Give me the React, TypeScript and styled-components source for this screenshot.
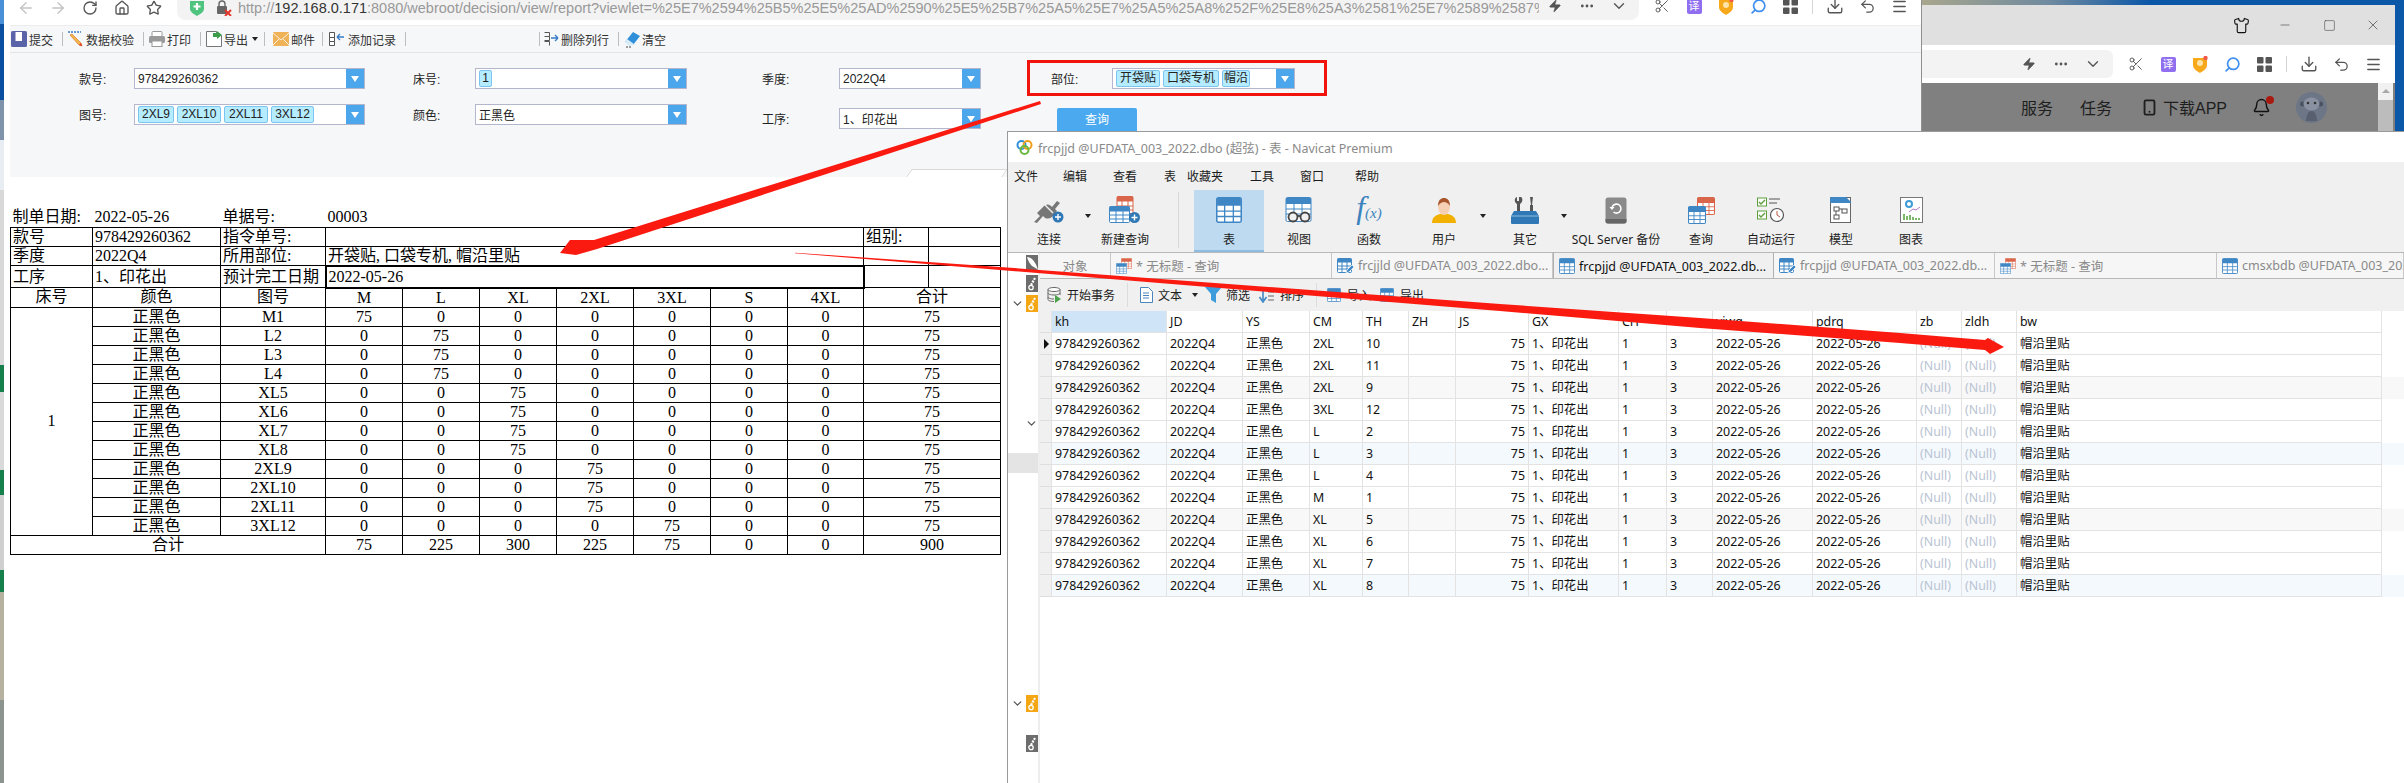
import React from "react";
import styled, { createGlobalStyle } from "styled-components";
import {
  ArrowLeft, ArrowRight, RotateCw, Home, Star, Zap, MoreHorizontal, ChevronDown, Scissors, Search,
  Download, Undo2, Menu, Shirt, Minus, Square, X, Bell, Smartphone, ChevronDown as Chevron,
} from "lucide-react";

const UI_FONT = `"Liberation Sans", "Noto Sans CJK SC", sans-serif`;
const NAV_FONT = `"Noto Sans", "Noto Sans CJK SC", sans-serif`;
const REPORT_FONT = `"Liberation Serif", "Noto Sans CJK SC", serif`;

const GlobalStyle = createGlobalStyle`
  html, body { margin: 0; padding: 0; background: #fff; }
  * { box-sizing: border-box; }
`;

const Desktop = styled.div`
  position: relative;
  width: 2404px;
  height: 783px;
  overflow: hidden;
  font-family: ${UI_FONT};
  background:
    linear-gradient(180deg, #4a90d9 0 24px, #0b4fa0 24px 100px, #7f93ab 100px 140px, #e8edf3 140px 190px, #d8d8d8 190px 365px, #16804c 365px 392px, #d9d9d9 392px 470px, #16804c 470px 495px, #cfcfcf 495px 570px, #16804c 570px 592px, #b6b09e 592px 700px, #8c9490 700px) 0 0 / 4px 100% no-repeat,
    linear-gradient(90deg, #a8a68c 1922px, #6f8aa0 2050px, #0b57a8 2150px);
`;

const FrontWindow = styled.div`
  position: absolute;
  left: 4px;
  top: 0;
  width: 1918px;
  height: 783px;
  background: #fff;
  overflow: hidden;
  border-right: 1px solid #8f8f8f;
`;

const BackWindow = styled.div`
  position: absolute;
  left: 1922px;
  top: 5px;
  width: 473px;
  height: 126px;
  overflow: hidden;
  display: flex;
  flex-direction: column;
`;

const BackTitle = styled.div`
  height: 40px;
  background: #e0e0e0;
  display: flex;
  align-items: center;
  justify-content: flex-end;
  color: #333;
`;

const CaptionButton = styled.div`
  width: 44px;
  display: flex;
  justify-content: center;
  color: #555;
`;

const AddressRow = styled.div<{ $front?: boolean }>`
  height: 38px;
  flex: none;
  display: flex;
  align-items: center;
  background: #fff;
  padding-right: 6px;
  margin-top: ${(p) => (p.$front ? "-13px" : "0")};
  padding-left: ${(p) => (p.$front ? "6px" : "0")};
`;

const NavSlot = styled.div<{ $dim?: boolean }>`
  width: 32px;
  height: 20px;
  flex: none;
  display: flex;
  align-items: center;
  justify-content: center;
  color: ${(p) => (p.$dim ? "#c4c4c4" : "#555")};
  transform: translateY(2px);
`;

const PillSlot = styled(NavSlot)`
  transform: none;
`;

const Pill = styled.div<{ $front?: boolean }>`
  flex: 1;
  min-width: 0;
  height: 28px;
  background: #f3f3f3;
  border-radius: ${(p) => (p.$front ? "8px" : "0 6px 6px 0")};
  margin-left: ${(p) => (p.$front ? "7px" : "0")};
  display: flex;
  align-items: center;
  padding-left: 13px;
  padding-right: 4px;
`;

const Url = styled.div`
  flex: 1;
  min-width: 0;
  margin-left: 6px;
  white-space: nowrap;
  overflow: hidden;
  font-size: 14.5px;
  color: #999;
  font-family: "Liberation Sans", sans-serif;
  transform: translateY(2px);

  b {
    font-weight: 400;
    color: #333;
  }
`;

const Spacer = styled.div`
  flex: 1;
`;

const ToolSlot = styled.div`
  width: 32px;
  height: 24px;
  flex: none;
  display: flex;
  align-items: center;
  justify-content: center;
  color: #555;
`;

const ToolGap = styled.div`
  width: 7px;
  flex: none;
`;

const ToolSep = styled.div`
  width: 1px;
  height: 16px;
  margin: 0 6px;
  flex: none;
  background: #d5d5d5;
`;

const TranslateBadge = styled.span`
  width: 15px;
  height: 15px;
  border-radius: 2px;
  background: #8f6ff0;
  color: #fff;
  font-size: 11px;
  line-height: 15px;
  text-align: center;
`;

const DimArea = styled.div`
  flex: 1;
  background: #808080;
  display: flex;
  align-items: center;
  justify-content: flex-end;
  color: #1e1e1e;
  font-size: 16px;
  overflow: hidden;
`;

const DimLink = styled.span<{ $mr: number }>`
  margin-right: ${(p) => p.$mr}px;
  display: flex;
  align-items: center;
  gap: 5px;
  white-space: nowrap;
`;

const BellWrap = styled.span`
  position: relative;
  display: flex;
`;

const SmallDot = styled.span`
  position: absolute;
  right: -3px;
  top: -2px;
  width: 8px;
  height: 8px;
  border-radius: 50%;
  background: #a81a10;
`;

const PageScroll = styled.div`
  width: 15px;
  height: 100%;
  margin-left: 51px;
  margin-right: 2px;
  background: #f1f1f1;
  padding-top: 17px;
  position: relative;

  &::before {
    content: "";
    position: absolute;
    left: 4px;
    top: 6px;
    border: 4px solid transparent;
    border-top: 0;
    border-bottom: 4px solid #a8a8a8;
  }

  &::after {
    content: "";
    display: block;
    height: 100%;
    background: #bcbcbc;
  }
`;

const Toolbar = styled.div`
  margin-left: 6px;
  height: 28px;
  background: #f6f7f9;
  border-top: 1px solid #ececec;
  border-bottom: 1px solid #e2e4e8;
  display: flex;
  align-items: center;
  padding-left: 1px;
  color: #333;
  font-size: 12px;
`;

const ToolItem = styled.div<{ $gap?: number }>`
  display: flex;
  align-items: center;
  gap: ${(p) => p.$gap ?? 2}px;
  white-space: nowrap;
`;

const BarSep = styled.div<{ $l?: number; $r?: number }>`
  width: 1px;
  height: 14px;
  background: #bdbdbd;
  margin-left: ${(p) => p.$l ?? 9}px;
  margin-right: ${(p) => p.$r ?? 5}px;
`;

const SmallCaret = styled.span<{ $ml?: number; $color?: string }>`
  width: 0;
  height: 0;
  flex: none;
  margin-left: ${(p) => p.$ml ?? 0}px;
  border: 3px solid transparent;
  border-bottom: 0;
  border-top: 4px solid ${(p) => p.$color ?? "#222"};
`;

const DropCaret = styled(SmallCaret)`
  border-width: 6px 4px 0;
`;

const FilterPanel = styled.div`
  position: relative;
  margin-left: 6px;
  height: 124px;
  background: #f6f7f9;
  padding: 15px 0 0 69px;
  display: flex;
  flex-direction: column;
  gap: 15px;
  font-size: 12px;
  color: #222;
`;

const FilterRow = styled.div`
  display: flex;
  height: 21px;
`;

const Field = styled.div<{ $ml?: number; $drop?: number }>`
  display: flex;
  align-items: center;
  margin-left: ${(p) => p.$ml ?? 0}px;
  margin-top: ${(p) => p.$drop ?? 0}px;
  height: 21px;
  flex: none;
`;

const FieldLabel = styled.span<{ $w: number }>`
  width: ${(p) => p.$w}px;
  flex: none;
`;

const Combo = styled.div<{ $w: number }>`
  width: ${(p) => p.$w}px;
  height: 21px;
  display: flex;
  background: #fff;
  border: 1px solid #b3b6cc;
  overflow: hidden;
`;

const ComboValue = styled.div`
  flex: 1;
  min-width: 0;
  display: flex;
  align-items: center;
  gap: 3px;
  padding-left: 3px;
  white-space: nowrap;
  overflow: hidden;
`;

const Tag = styled.span<{ $w: number }>`
  width: ${(p) => p.$w}px;
  flex: none;
  height: 17px;
  line-height: 15px;
  text-align: center;
  background: #b6ecff;
  border: 1px solid #7cc5f0;
  border-radius: 2px;
  overflow: hidden;
`;

const ComboButton = styled.div`
  width: 18px;
  flex: none;
  background: #4ba6ec;
  display: flex;
  align-items: center;
  justify-content: center;
`;

const QueryButton = styled.div`
  width: 80px;
  height: 28px;
  margin-left: 76px;
  margin-top: 4px;
  flex: none;
  background: #4aa9ef;
  border-radius: 2px;
  color: #fff;
  text-align: center;
  line-height: 24px;
`;

const SplitHandle = styled.div`
  position: absolute;
  right: 916px;
  bottom: 0;
  width: 96px;
  height: 8px;
  background: #fff;
  border: 1px solid #d9d9d9;
  border-bottom: 0;
  transform: skewX(-35deg);
`;

const ReportArea = styled.div`
  padding: 31px 0 0 6px;
  background: #fff;
`;

const ReportTable = styled.table`
  width: 990px;
  table-layout: fixed;
  border-collapse: collapse;
  font-family: ${REPORT_FONT};
  font-size: 16px;
  line-height: 18px;
  color: #000;
`;

const ReportRow = styled.tr<{ $h?: number }>`
  height: ${(p) => p.$h ?? 19}px;
`;

const Cell = styled.td<{ $left?: boolean; $plain?: boolean; $heavy?: boolean }>`
  padding: 0;
  padding-left: ${(p) => (p.$left ? "2px" : "0")};
  overflow: hidden;
  white-space: nowrap;
  text-align: ${(p) => (p.$left ? "left" : "center")};
  border: ${(p) => (p.$plain ? "0" : p.$heavy ? "2px solid #000" : "1px solid #000")};
`;

const NavicatWindow = styled.div`
  position: absolute;
  left: 1007px;
  top: 131px;
  width: 1397px;
  height: 652px;
  display: flex;
  flex-direction: column;
  background: #f0f0f0;
  border-top: 1px solid #9a9a9a;
  border-left: 1px solid #9a9a9a;
  font-family: ${NAV_FONT};
  font-size: 12px;
  color: #1c1c1c;
  overflow: hidden;
`;

const TitleBar = styled.div`
  height: 30px;
  flex: none;
  background: #fff;
  display: flex;
  align-items: center;
  gap: 5px;
  padding-left: 8px;
  font-size: 12.5px;
  color: #8a8a8a;
  white-space: nowrap;
`;

const MenuBar = styled.div`
  height: 28px;
  flex: none;
  display: flex;
  align-items: center;
  padding-left: 6px;
`;

const MenuItem = styled.span<{ $mr: number }>`
  margin-right: ${(p) => p.$mr}px;
  white-space: nowrap;
`;

const RibbonBar = styled.div`
  height: 62px;
  flex: none;
  display: flex;
  padding-left: 6px;
`;

const Tile = styled.div<{ $w?: number; $active?: boolean }>`
  width: ${(p) => p.$w ?? 70}px;
  flex: none;
  height: 62px;
  padding-top: 3px;
  display: flex;
  flex-direction: column;
  align-items: center;
  white-space: nowrap;
  background: ${(p) => (p.$active ? "#bedaf0" : "transparent")};
  border-bottom: 2px solid ${(p) => (p.$active ? "#8fbde2" : "transparent")};
`;

const TileIcon = styled.div`
  height: 34px;
  margin-bottom: 3px;
  display: flex;
  align-items: center;
  justify-content: center;
`;

const FxMark = styled.span`
  font-family: "Liberation Serif", serif;
  font-style: italic;
  font-size: 32px;
  line-height: 30px;
  color: #3c83be;

  small {
    font-size: 15px;
  }
`;

const RibbonCaret = styled.div<{ $w: number }>`
  width: ${(p) => p.$w}px;
  flex: none;
  padding-top: 28px;
  height: 62px;
  padding-left: 1px;
`;

const RibbonSep = styled.div`
  width: 1px;
  height: 56px;
  margin: 2px 15px 0 18px;
  flex: none;
  background: #d8d8d8;
`;

const NavBody = styled.div`
  flex: 1;
  min-height: 0;
  display: flex;
  border-top: 1px solid #b8b8b8;
`;

const Sidebar = styled.div`
  width: 32px;
  flex: none;
  background: #fff;
  border-right: 2px solid #eee;
  display: flex;
  flex-direction: column;
  padding-top: 2px;
`;

const SideRow = styled.div<{ $mt?: number; $h?: number; $selected?: boolean }>`
  position: relative;
  height: ${(p) => p.$h ?? 17}px;
  flex: none;
  margin-top: ${(p) => p.$mt ?? 0}px;
  display: flex;
  align-items: center;
  justify-content: flex-end;
  padding-left: 2px;
  background: ${(p) => (p.$selected ? "#e4e4e4" : "transparent")};
  color: #555;
`;

const SideTile = styled.div<{ $orange?: boolean }>`
  width: 12px;
  height: 17px;
  flex: none;
  background: ${(p) => (p.$orange ? "#f4a614" : "#6c6c6c")};
  display: flex;
  align-items: center;
  justify-content: center;
`;

const SideChevron = styled.div<{ $ml: number }>`
  margin-right: auto;
  margin-left: ${(p) => p.$ml}px;
  display: flex;
`;

const MainColumn = styled.div`
  flex: 1;
  min-width: 0;
  display: flex;
  flex-direction: column;
`;

const TabBar = styled.div`
  height: 26px;
  flex: none;
  display: flex;
  background: #f6f6f6;
  border-bottom: 1px solid #b8b8b8;
  overflow: hidden;
  color: #8a8a8a;
  font-size: 12.5px;
`;

const Tab = styled.div<{ $w: number; $active?: boolean; $center?: boolean }>`
  width: ${(p) => p.$w}px;
  flex: none;
  height: ${(p) => (p.$active ? "26px" : "25px")};
  display: flex;
  align-items: center;
  justify-content: ${(p) => (p.$center ? "center" : "flex-start")};
  gap: 4px;
  padding-left: ${(p) => (p.$center ? "0" : "5px")};
  white-space: nowrap;
  overflow: hidden;
  background: ${(p) => (p.$active ? "#f0f0f0" : "transparent")};
  color: ${(p) => (p.$active ? "#111" : "#8a8a8a")};
  border-right: 1px solid ${(p) => (p.$active ? "#b0b0b0" : "#c8c8c8")};
  border-left: ${(p) => (p.$active ? "1px solid #b0b0b0" : "0")};
`;

const SubBar = styled.div`
  height: 32px;
  flex: none;
  display: flex;
  align-items: center;
  padding-left: 7px;
  background: #f0f0f0;
`;

const SubItem = styled.div<{ $gap?: number; $mr?: number }>`
  display: flex;
  align-items: center;
  gap: ${(p) => p.$gap ?? 5}px;
  margin-right: ${(p) => p.$mr ?? 9}px;
  white-space: nowrap;
`;

const SubSep = styled.div<{ $r: number }>`
  width: 1px;
  height: 24px;
  margin-left: 3px;
  margin-right: ${(p) => p.$r}px;
  background: #dcdcdc;
`;

const GridArea = styled.div`
  flex: 1;
  background: #fff;
  font-size: 12.4px;
`;

const GridRow = styled.div<{ $tint?: string }>`
  display: grid;
  grid-template-columns: 12px 115px 76px 67px 53px 46px 47px 73px 90px 48px 46px 100px 104px 45px 55px 365px;
  height: 22px;
  background: ${(p) => p.$tint ?? "#fff"};
`;

const GridCell = styled.div<{ $right?: boolean; $null?: boolean; $selected?: boolean }>`
  height: 22px;
  line-height: 21px;
  padding: 0 3px;
  white-space: nowrap;
  overflow: hidden;
  text-align: ${(p) => (p.$right ? "right" : "left")};
  color: ${(p) => (p.$null ? "#b9c3d3" : "#111")};
  background: ${(p) => (p.$selected ? "#cfe4f6" : "transparent")};
  border-right: 1px solid #e3e3e3;
  border-bottom: 1px solid #e3e3e3;
`;

const Marker = styled.div<{ $current?: boolean }>`
  height: 22px;
  background: #f0f0f0;
  border-bottom: 1px solid #dedede;
  border-right: 1px solid #e3e3e3;
  display: flex;
  align-items: center;
  padding-left: 4px;

  &::before {
    content: "";
    display: ${(p) => (p.$current ? "block" : "none")};
    border: 5px solid transparent;
    border-right: 0;
    border-left: 5px solid #111;
  }
`;

const Overlay = styled.svg`
  position: absolute;
  left: 0;
  top: 0;
  pointer-events: none;
`;

const IconStack = styled.span<{ $w: number; $h: number }>`
  position: relative;
  display: block;
  flex: none;
  width: ${(p) => p.$w}px;
  height: ${(p) => p.$h}px;
`;

const StackTop = styled.span`
  position: absolute;
  right: 0;
  top: 0;
  display: flex;
`;

const StackBottom = styled.span`
  position: absolute;
  left: 0;
  bottom: 0;
  display: flex;
`;

function GridIcon({ size = 16, color = "#3f86c4" }: { size?: number; color?: string }) {
  return (
    <svg width={size} height={size} viewBox="0 0 24 24" style={{ flex: "none" }}>
      <rect x="0.7" y="0.7" width="22.6" height="22.6" rx="1.5" fill="#fff" stroke={color} strokeWidth="1.4" />
      <path d="M1 2a1 1 0 0 1 1-1h20a1 1 0 0 1 1 1v6H1z" fill={color} />
      <path d="M1 13h22M1 18h22M8 7v16M16 7v16" stroke={color} strokeWidth="1.2" />
    </svg>
  );
}

function QueryIcon({ size = 16 }: { size?: number }) {
  const inner = Math.round(size * 0.68);
  return (
    <IconStack $w={size} $h={size}>
      <StackTop><GridIcon size={inner} color="#d9664a" /></StackTop>
      <StackBottom><GridIcon size={inner} /></StackBottom>
    </IconStack>
  );
}

function EditGridIcon() {
  return (
    <svg width="17" height="16" viewBox="0 0 17 16" style={{ flex: "none" }}>
      <rect x="0.5" y="0.5" width="14" height="14" rx="1" fill="#fff" stroke="#3f86c4" />
      <rect x="0.5" y="0.5" width="14" height="4" fill="#3f86c4" />
      <path d="M0 8h14M0 11h14M5 4v11M10 4v11" stroke="#3f86c4" />
      <path d="M9 15l1-3 5-5 2 2-5 5z" fill="#3f86c4" stroke="#fff" strokeWidth=".7" />
    </svg>
  );
}

function PlusBadge({ x, y }: { x: number; y: number }) {
  return (
    <g>
      <circle cx={x} cy={y} r="5.5" fill="#2f78b5" />
      <path d={`M${x - 3} ${y}h6M${x} ${y - 3}v6`} stroke="#fff" strokeWidth="1.4" />
    </g>
  );
}

function PlugIcon() {
  return (
    <svg width="32" height="28" viewBox="0 0 32 28">
      <path d="M1 26l6-6-3-3 7-7c3-2 5-2 7 0l1 1 5-6 3 2-5 6 2 2-5 6c-3 2-6 2-8 0l-1-1-6 7z" fill="#777" />
      <path d="M12 9l8 8" stroke="#f0f0f0" strokeWidth="1.5" />
      <PlusBadge x={25} y={21} />
    </svg>
  );
}

function NewQueryIcon() {
  return (
    <svg width="32" height="28" viewBox="0 0 32 28">
      <rect x="8" y="0.5" width="16" height="17" rx="1" fill="#fff" stroke="#d9664a" />
      <rect x="8" y="0.5" width="16" height="5" fill="#d9664a" />
      <path d="M8 10h16M8 14h16M13 5v13M19 5v13" stroke="#d9664a" />
      <rect x="0.5" y="10.5" width="20" height="16" rx="1" fill="#fff" stroke="#3f86c4" />
      <rect x="0.5" y="10.5" width="20" height="5" fill="#3f86c4" />
      <path d="M0 19h20M0 23h20M7 15v12M14 15v12" stroke="#3f86c4" />
      <PlusBadge x={25.5} y={21.5} />
    </svg>
  );
}

function ViewIcon() {
  return (
    <svg width="28" height="26" viewBox="0 0 28 26">
      <rect x="1" y="0.5" width="25" height="24" rx="1.5" fill="#fff" stroke="#3f86c4" />
      <path d="M1 2a1.5 1.5 0 0 1 1.5-1.5h22A1.5 1.5 0 0 1 26 2v5H1z" fill="#3f86c4" />
      <path d="M1 12h25M1 17h25M9 7v18M17 7v18" stroke="#3f86c4" />
      <circle cx="8" cy="20" r="4.5" fill="#f0f0f0" stroke="#444" strokeWidth="1.8" />
      <circle cx="20" cy="20" r="4.5" fill="#f0f0f0" stroke="#444" strokeWidth="1.8" />
      <path d="M12.5 19h3" stroke="#444" strokeWidth="1.8" />
    </svg>
  );
}

function UserIcon() {
  return (
    <svg width="26" height="27" viewBox="0 0 26 27">
      <path d="M1 26c0-6 4-8 8-9h8c4 1 8 3 8 9z" fill="#f2b000" />
      <ellipse cx="13" cy="10" rx="6" ry="8" fill="#f6d0b4" />
      <path d="M7 9c0-6 3-8 6-8s6 2 6 8c-2-3-4-4-6-4s-4 1-6 4z" fill="#a8552c" />
    </svg>
  );
}

function ToolsIcon() {
  return (
    <svg width="28" height="28" viewBox="0 0 28 28">
      <path d="M8 1v4h-2V1C3 2 3 6 6 8v10h3V8c3-2 3-6 1-7z" fill="#555" />
      <path d="M19 1l1 8h-1v9h3V9h-1l1-8z" fill="#555" />
      <path d="M3 15h22l3 5v7a1 1 0 0 1-1 1H1a1 1 0 0 1-1-1v-7z" fill="#2f78b5" />
      <path d="M0 20h28" stroke="#8fbde2" />
    </svg>
  );
}

function BackupIcon() {
  return (
    <svg width="22" height="27" viewBox="0 0 22 27">
      <rect x="0.5" y="0.5" width="21" height="26" rx="2.5" fill="#8a8a8a" />
      <path d="M0.5 22h21v2a2.5 2.5 0 0 1-2.5 2.5H3A2.5 2.5 0 0 1 .5 24z" fill="#666" />
      <path d="M7 11a4.5 4.5 0 1 1 1.5 4" fill="none" stroke="#fff" strokeWidth="1.6" />
      <path d="M4.5 10h5l-2.5 3z" fill="#fff" />
    </svg>
  );
}

function AutoRunIcon() {
  return (
    <svg width="28" height="26" viewBox="0 0 28 26">
      <rect x="0.5" y="1" width="9" height="8" fill="#fff" stroke="#5d9e3c" />
      <path d="M2 5l2 2 4-4" fill="none" stroke="#5d9e3c" strokeWidth="1.4" />
      <path d="M12 2h11M12 6h8" stroke="#888" strokeWidth="1.4" />
      <rect x="0.5" y="14" width="9" height="8" fill="#fff" stroke="#5d9e3c" />
      <path d="M2 18l2 2 4-4" fill="none" stroke="#5d9e3c" strokeWidth="1.4" />
      <circle cx="20" cy="18" r="6.5" fill="#fff" stroke="#555" strokeWidth="1.2" />
      <path d="M20 14v4l3 2" fill="none" stroke="#c2563c" />
    </svg>
  );
}

function ModelIcon() {
  return (
    <svg width="22" height="26" viewBox="0 0 22 26">
      <rect x="0.5" y="0.5" width="20" height="25" fill="#fff" stroke="#666" />
      <path d="M0 0h16l5 5v1H0z" fill="#3f86c4" />
      <rect x="4" y="10" width="5" height="4" fill="#fff" stroke="#555" />
      <rect x="12" y="12" width="5" height="4" fill="#fff" stroke="#555" />
      <rect x="4" y="18" width="5" height="4" fill="#fff" stroke="#555" />
      <path d="M9 12h3M6 14v4" stroke="#555" />
    </svg>
  );
}

function ChartIcon() {
  return (
    <svg width="23" height="26" viewBox="0 0 23 26">
      <rect x="0.5" y="0.5" width="22" height="25" fill="#fff" stroke="#777" />
      <circle cx="9" cy="7" r="3" fill="none" stroke="#3f9cd6" strokeWidth="2" />
      <path d="M9 15l4-3 3 1 4-3" fill="none" stroke="#b878c8" />
      <path d="M4 23v-6M7 23v-4M10 23v-5M13 23v-3M16 23v-2M19 23v-2" stroke="#5aa845" strokeWidth="1.6" />
    </svg>
  );
}

function LogoIcon() {
  return (
    <svg width="17" height="17" viewBox="0 0 17 17">
      <circle cx="5.5" cy="6" r="4" fill="none" stroke="#2f8fd8" strokeWidth="2" />
      <circle cx="11.5" cy="6" r="4" fill="none" stroke="#f0a020" strokeWidth="2" />
      <circle cx="8.5" cy="11" r="4" fill="none" stroke="#68b840" strokeWidth="2" />
    </svg>
  );
}

function KeyGlyph() {
  return (
    <svg width="9" height="14" viewBox="0 0 9 14">
      <path d="M7 1L3 8" stroke="#fff" strokeWidth="2.2" strokeDasharray="2 1" />
      <circle cx="3" cy="10.5" r="2.2" fill="none" stroke="#fff" strokeWidth="1.3" />
    </svg>
  );
}

function DolphinGlyph() {
  return (
    <svg width="11" height="15" viewBox="0 0 11 15">
      <path d="M0 1c4 0 8 4 10 10l1 3c-2-2-4-3-6-4C3 8 1 5 0 1z" fill="#fff" />
    </svg>
  );
}

function ShieldIcon() {
  return (
    <svg width="16" height="17" viewBox="0 0 16 17">
      <path d="M1 2h14v7c0 4-4 6-7 8-3-2-7-4-7-8z" fill="#f7a81b" />
      <circle cx="8" cy="7" r="3" fill="#ffe3a8" />
      <circle cx="13.5" cy="2" r="2.2" fill="#f2584a" />
    </svg>
  );
}

function AppsIcon() {
  return (
    <svg width="15" height="15" viewBox="0 0 15 15" fill="#555">
      <rect width="6.5" height="6.5" rx="1" />
      <rect x="8.5" width="6.5" height="6.5" rx="1" />
      <rect y="8.5" width="6.5" height="6.5" rx="1" />
      <rect x="8.5" y="8.5" width="6.5" height="6.5" rx="1" />
    </svg>
  );
}

function GreenShield() {
  return (
    <svg width="14" height="16" viewBox="0 0 14 16" style={{ flex: "none", transform: "translateY(2px)" }}>
      <path d="M0 1h14v8c0 3-4 5-7 7-3-2-7-4-7-7z" fill="#4fc47f" />
      <path d="M7 3v7M3.5 6.5h7" stroke="#fff" strokeWidth="2.2" />
    </svg>
  );
}

function LockIcon() {
  return (
    <svg width="16" height="16" viewBox="0 0 16 16" style={{ flex: "none", marginLeft: 12, transform: "translateY(2px)" }}>
      <rect x="1" y="6" width="10" height="8" rx="1" fill="#666" />
      <path d="M3 6V4a3 3 0 0 1 6 0v2" fill="none" stroke="#666" strokeWidth="1.4" />
      <path d="M9 10l6 6M15 10l-6 6" stroke="#e2372a" strokeWidth="2" />
    </svg>
  );
}

function SaveIcon() {
  return (
    <svg width="16" height="16" viewBox="0 0 16 16">
      <rect x="0.5" y="0.5" width="15" height="15" rx="1" fill="#fff" stroke="#5a62a8" />
      <rect x="0.5" y="0.5" width="4" height="15" fill="#5a62a8" />
      <rect x="11" y="0.5" width="4.5" height="15" fill="#5a62a8" />
      <rect x="0.5" y="10" width="15" height="5.5" fill="#5a62a8" />
    </svg>
  );
}

function CheckDataIcon() {
  return (
    <svg width="16" height="16" viewBox="0 0 16 16">
      <path d="M0 1h13" stroke="#3a7cc8" strokeDasharray="2 1" strokeWidth="1.4" />
      <path d="M2 4l9 10 3 1-1-3L4 3z" fill="#f2b84b" stroke="#d9772a" strokeWidth=".7" />
      <path d="M11 14l3 1-1-3z" fill="#e2372a" />
    </svg>
  );
}

function PrintIcon() {
  return (
    <svg width="16" height="16" viewBox="0 0 16 16" fill="#9a9a9a">
      <rect x="3" y="0.5" width="10" height="5" rx="1" fill="#fff" stroke="#9a9a9a" />
      <rect y="5" width="16" height="7" rx="1.5" />
      <rect x="3" y="10" width="10" height="5.5" fill="#fff" stroke="#9a9a9a" />
    </svg>
  );
}

function ExportIcon() {
  return (
    <svg width="16" height="16" viewBox="0 0 16 16">
      <path d="M0.5 0.5h10v4h5v11H0.5z" fill="#fff" stroke="#777" />
      <path d="M7 2h4V0l5 4-5 4V6H7z" fill="#3c9e4a" />
    </svg>
  );
}

function MailIcon() {
  return (
    <svg width="16" height="16" viewBox="0 0 16 16">
      <rect y="1" width="16" height="14" rx="1" fill="#efb257" />
      <path d="M0 2l8 7 8-7M0 14l6-6M16 14l-6-6" fill="none" stroke="#fff" strokeWidth=".8" />
    </svg>
  );
}

function AddRowIcon() {
  return (
    <svg width="16" height="16" viewBox="0 0 16 16">
      <path d="M0.5 1.5h5v5h-5zM0.5 6.5h5v4h-5zM0.5 10.5h5v4h-5z" fill="#fff" stroke="#555" />
      <path d="M15 6H8M8 6l3-3M8 6l3 3" stroke="#3a7cc8" strokeWidth="1.4" fill="none" />
    </svg>
  );
}

function DeleteRowIcon() {
  return (
    <svg width="15" height="16" viewBox="0 0 15 16">
      <path d="M0.5 1.5h5v4h-5M5.5 5.5v4h-5M0.5 10.5h5v4" fill="none" stroke="#555" />
      <path d="M7 7h7M14 7l-3-3M14 7l-3 3" stroke="#3a7cc8" strokeWidth="1.4" fill="none" />
    </svg>
  );
}

function EraserIcon() {
  return (
    <svg width="17" height="17" viewBox="0 0 17 17">
      <path d="M1 11l8-10 7 4-7 9z" fill="#2f8fd8" />
      <path d="M1 11l4 4 4-1 1-1-7-5z" fill="#d8ecf8" />
      <path d="M2 16h6" stroke="#444" strokeDasharray="2 1" />
    </svg>
  );
}

function DbIcon() {
  return (
    <svg width="14" height="16" viewBox="0 0 14 16">
      <ellipse cx="7" cy="2.5" rx="6" ry="2" fill="#fff" stroke="#666" />
      <path d="M1 2.5v10c0 1 2.5 2 6 2M13 2.5V8M1 6c0 1 2.5 2 6 2s6-1 6-2M1 10c0 1 2.5 2 6 2" fill="none" stroke="#666" />
      <path d="M8 8l6 4-6 4z" fill="#4aa34a" />
    </svg>
  );
}

function DocIcon() {
  return (
    <svg width="15" height="16" viewBox="0 0 15 16">
      <path d="M1.5 0.5h8l4 4v11h-12z" fill="#fff" stroke="#4a84bd" />
      <path d="M4 6h6M4 8.5h6M4 11h6" stroke="#4a84bd" />
    </svg>
  );
}

function FunnelIcon() {
  return (
    <svg width="17" height="16" viewBox="0 0 17 16">
      <path d="M0 0h17l-6 7v9l-5-3V7z" fill="#3f9cdc" />
    </svg>
  );
}

function SortIcon() {
  return (
    <svg width="15" height="16" viewBox="0 0 15 16">
      <path d="M4 0v13M0.5 10L4 15l3.5-5" stroke="#3f86c4" strokeWidth="1.6" fill="none" />
      <path d="M9 5h6M9 9h6M9 13h6" stroke="#666" />
    </svg>
  );
}

function AvatarIcon() {
  return (
    <svg width="31" height="31" viewBox="0 0 31 31">
      <circle cx="15.5" cy="15.5" r="15.5" fill="#6d7686" />
      <circle cx="6.5" cy="12" r="2.5" fill="#4a5160" />
      <circle cx="24.5" cy="12" r="2.5" fill="#4a5160" />
      <ellipse cx="15.5" cy="12" rx="8" ry="6.5" fill="#8a92a1" />
      <circle cx="12" cy="11" r="1.3" fill="#333" />
      <circle cx="19" cy="11" r="1.3" fill="#333" />
      <path d="M10 29c0-5 2-10 5.5-10S21 24 21 29z" fill="#586070" />
    </svg>
  );
}

function BrowserTools() {
  return (
    <>
      <ToolGap />
      <ToolSlot><Scissors size={16} strokeWidth={1.4} /></ToolSlot>
      <ToolSlot><TranslateBadge>译</TranslateBadge></ToolSlot>
      <ToolSlot><ShieldIcon /></ToolSlot>
      <ToolSlot><Search size={17} strokeWidth={2.4} color="#3f8ff0" style={{ transform: "scaleX(-1)" }} /></ToolSlot>
      <ToolSlot><AppsIcon /></ToolSlot>
      <ToolSep />
      <ToolSlot><Download size={18} strokeWidth={1.8} /></ToolSlot>
      <ToolSlot><Undo2 size={17} strokeWidth={1.8} /></ToolSlot>
      <ToolSlot><Menu size={17} strokeWidth={2} /></ToolSlot>
    </>
  );
}

function PillTools() {
  return (
    <>
      <PillSlot><Zap size={14} fill="#555" strokeWidth={1} /></PillSlot>
      <PillSlot><MoreHorizontal size={16} strokeWidth={2.2} /></PillSlot>
      <PillSlot><ChevronDown size={18} strokeWidth={1.8} /></PillSlot>
    </>
  );
}

function Dropdown() {
  return (
    <ComboButton>
      <DropCaret $color="#fff" />
    </ComboButton>
  );
}

const SIZES = ["M", "L", "XL", "2XL", "3XL", "S", "4XL"];
const REPORT_ROWS: [string, number][] = [
  ["M1", 0], ["L2", 1], ["L3", 1], ["L4", 1], ["XL5", 2], ["XL6", 2], ["XL7", 2], ["XL8", 2],
  ["2XL9", 3], ["2XL10", 3], ["2XL11", 3], ["3XL12", 4],
];
const REPORT_TOTALS = [75, 225, 300, 225, 75, 0, 0];

const GRID_HEAD = ["kh", "JD", "YS", "CM", "TH", "ZH", "JS", "GX", "CH", "", "viwq", "pdrq", "zb", "zldh", "bw"];
const GRID_ROWS: [string, string][] = [
  ["2XL", "10"], ["2XL", "11"], ["2XL", "9"], ["3XL", "12"], ["L", "2"], ["L", "3"],
  ["L", "4"], ["M", "1"], ["XL", "5"], ["XL", "6"], ["XL", "7"], ["XL", "8"],
];

function rowTint(i: number) {
  if (i % 6 === 5) return "#f4f9fd";
  if (i % 6 === 2) return "#f8f8f8";
  return "#fff";
}

function Report() {
  return (
    <ReportArea>
      <ReportTable>
        <colgroup>
          {[82, 128, 105, 77, 77, 77, 77, 77, 77, 76, 65, 72].map((w, i) => (
            <col key={i} width={w} />
          ))}
        </colgroup>
        <tbody>
          <ReportRow>
            <Cell $plain $left>制单日期:</Cell>
            <Cell $plain $left>2022-05-26</Cell>
            <Cell $plain $left>单据号:</Cell>
            <Cell $plain $left colSpan={2}>00003</Cell>
            <Cell $plain colSpan={7} />
          </ReportRow>
          <ReportRow>
            <Cell $left>款号</Cell>
            <Cell $left>978429260362</Cell>
            <Cell $left>指令单号:</Cell>
            <Cell $left colSpan={7} />
            <Cell $left>组别:</Cell>
            <Cell />
          </ReportRow>
          <ReportRow>
            <Cell $left>季度</Cell>
            <Cell $left>2022Q4</Cell>
            <Cell $left>所用部位:</Cell>
            <Cell $left colSpan={7}>开袋贴, 口袋专机, 帽沿里贴</Cell>
            <Cell />
            <Cell />
          </ReportRow>
          <ReportRow $h={22}>
            <Cell $left>工序</Cell>
            <Cell $left>1、印花出</Cell>
            <Cell $left>预计完工日期</Cell>
            <Cell $left $heavy colSpan={7}>2022-05-26</Cell>
            <Cell />
            <Cell />
          </ReportRow>
          <ReportRow>
            <Cell>床号</Cell>
            <Cell>颜色</Cell>
            <Cell>图号</Cell>
            {SIZES.map((s) => <Cell key={s}>{s}</Cell>)}
            <Cell colSpan={2}>合计</Cell>
          </ReportRow>
          {REPORT_ROWS.map(([code, col], i) => (
            <ReportRow key={code}>
              {i === 0 && <Cell rowSpan={12}>1</Cell>}
              <Cell>正黑色</Cell>
              <Cell>{code}</Cell>
              {SIZES.map((s, c) => <Cell key={s}>{c === col ? 75 : 0}</Cell>)}
              <Cell colSpan={2}>75</Cell>
            </ReportRow>
          ))}
          <ReportRow>
            <Cell colSpan={3}>合计</Cell>
            {REPORT_TOTALS.map((t, i) => <Cell key={i}>{t}</Cell>)}
            <Cell colSpan={2}>900</Cell>
          </ReportRow>
        </tbody>
      </ReportTable>
    </ReportArea>
  );
}

function Navicat() {
  return (
    <NavicatWindow>
      <TitleBar>
        <LogoIcon />
        frcpjjd @UFDATA_003_2022.dbo (超弦) - 表 - Navicat Premium
      </TitleBar>
      <MenuBar>
        <MenuItem $mr={25}>文件</MenuItem>
        <MenuItem $mr={26}>编辑</MenuItem>
        <MenuItem $mr={27}>查看</MenuItem>
        <MenuItem $mr={11}>表</MenuItem>
        <MenuItem $mr={27}>收藏夹</MenuItem>
        <MenuItem $mr={26}>工具</MenuItem>
        <MenuItem $mr={31}>窗口</MenuItem>
        <MenuItem $mr={0}>帮助</MenuItem>
      </MenuBar>
      <RibbonBar>
        <Tile><TileIcon><PlugIcon /></TileIcon>连接</Tile>
        <RibbonCaret $w={6}><SmallCaret /></RibbonCaret>
        <Tile><TileIcon><NewQueryIcon /></TileIcon>新建查询</Tile>
        <RibbonSep />
        <Tile $active><TileIcon><GridIcon size={26} /></TileIcon>表</Tile>
        <Tile><TileIcon><ViewIcon /></TileIcon>视图</Tile>
        <Tile><TileIcon><FxMark>f<small>(x)</small></FxMark></TileIcon>函数</Tile>
        <RibbonCaret $w={5} />
        <Tile><TileIcon><UserIcon /></TileIcon>用户</Tile>
        <RibbonCaret $w={11}><SmallCaret /></RibbonCaret>
        <Tile><TileIcon><ToolsIcon /></TileIcon>其它</Tile>
        <RibbonCaret $w={10}><SmallCaret /></RibbonCaret>
        <Tile $w={92}><TileIcon><BackupIcon /></TileIcon>SQL Server 备份</Tile>
        <RibbonCaret $w={4} />
        <Tile><TileIcon><QueryIcon size={27} /></TileIcon>查询</Tile>
        <Tile><TileIcon><AutoRunIcon /></TileIcon>自动运行</Tile>
        <Tile><TileIcon><ModelIcon /></TileIcon>模型</Tile>
        <Tile><TileIcon><ChartIcon /></TileIcon>图表</Tile>
      </RibbonBar>
      <NavBody>
        <Sidebar>
          <SideRow><SideTile><DolphinGlyph /></SideTile></SideRow>
          <SideRow $mt={3}><SideTile><KeyGlyph /></SideTile></SideRow>
          <SideRow $mt={3}>
            <SideChevron $ml={1}><Chevron size={13} strokeWidth={2.4} /></SideChevron>
            <SideTile $orange><KeyGlyph /></SideTile>
          </SideRow>
          <SideRow $mt={103}><SideChevron $ml={15}><Chevron size={13} strokeWidth={2.4} /></SideChevron></SideRow>
          <SideRow $mt={21} $h={20} $selected />
          <SideRow $mt={222}>
            <SideChevron $ml={1}><Chevron size={13} strokeWidth={2.4} /></SideChevron>
            <SideTile $orange><KeyGlyph /></SideTile>
          </SideRow>
          <SideRow $mt={23}><SideTile><KeyGlyph /></SideTile></SideRow>
        </Sidebar>
        <MainColumn>
          <TabBar>
            <Tab $w={71} $center>对象</Tab>
            <Tab $w={221}><QueryIcon />* 无标题 - 查询</Tab>
            <Tab $w={221}><EditGridIcon />frcjjld @UFDATA_003_2022.dbo...</Tab>
            <Tab $w={221} $active><GridIcon />frcpjjd @UFDATA_003_2022.db...</Tab>
            <Tab $w={221}><EditGridIcon />frcpjjd @UFDATA_003_2022.db...</Tab>
            <Tab $w={222}><QueryIcon />* 无标题 - 查询</Tab>
            <Tab $w={187}><GridIcon />cmsxbdb @UFDATA_003_2022</Tab>
          </TabBar>
          <SubBar>
            <SubItem $mr={9} $gap={6}><DbIcon />开始事务</SubItem>
            <SubSep $r={11} />
            <SubItem $gap={4} $mr={7}><DocIcon />文本<SmallCaret $ml={6} /></SubItem>
            <SubItem $gap={4}><FunnelIcon />筛选</SubItem>
            <SubItem $gap={6}><SortIcon />排序</SubItem>
            <SubSep $r={10} />
            <SubItem $gap={6}><GridIcon size={14} />导入</SubItem>
            <SubItem $gap={6}><GridIcon size={14} />导出</SubItem>
          </SubBar>
          <GridArea>
            <GridRow>
              <Marker />
              {GRID_HEAD.map((h, i) => <GridCell key={i} $selected={i === 0}>{h}</GridCell>)}
            </GridRow>
            {GRID_ROWS.map(([cm, th], i) => (
              <GridRow key={th} $tint={rowTint(i)}>
                <Marker $current={i === 0} />
                <GridCell>978429260362</GridCell>
                <GridCell>2022Q4</GridCell>
                <GridCell>正黑色</GridCell>
                <GridCell>{cm}</GridCell>
                <GridCell>{th}</GridCell>
                <GridCell />
                <GridCell $right>75</GridCell>
                <GridCell>1、印花出</GridCell>
                <GridCell>1</GridCell>
                <GridCell>3</GridCell>
                <GridCell>2022-05-26</GridCell>
                <GridCell>2022-05-26</GridCell>
                <GridCell $null>(Null)</GridCell>
                <GridCell $null>(Null)</GridCell>
                <GridCell>帽沿里贴</GridCell>
              </GridRow>
            ))}
          </GridArea>
        </MainColumn>
      </NavBody>
    </NavicatWindow>
  );
}

export default function App() {
  return (
    <Desktop>
      <GlobalStyle />
      <BackWindow>
        <BackTitle>
          <CaptionButton><Shirt size={17} color="#111" strokeWidth={1.6} /></CaptionButton>
          <CaptionButton><Minus size={14} strokeWidth={1.2} /></CaptionButton>
          <CaptionButton><Square size={13} strokeWidth={1.2} /></CaptionButton>
          <CaptionButton><X size={16} strokeWidth={1.2} /></CaptionButton>
        </BackTitle>
        <AddressRow>
          <Pill>
            <Spacer />
            <PillTools />
          </Pill>
          <BrowserTools />
        </AddressRow>
        <DimArea>
          <DimLink $mr={27}>服务</DimLink>
          <DimLink $mr={29}>任务</DimLink>
          <DimLink $mr={25}><Smartphone size={17} strokeWidth={2.6} />下载APP</DimLink>
          <DimLink $mr={25}>
            <BellWrap>
              <Bell size={19} color="#111" strokeWidth={1.8} />
              <SmallDot />
            </BellWrap>
          </DimLink>
          <AvatarIcon />
          <PageScroll />
        </DimArea>
      </BackWindow>

      <FrontWindow>
        <AddressRow $front>
          <NavSlot $dim><ArrowLeft size={18} strokeWidth={1.8} /></NavSlot>
          <NavSlot $dim><ArrowRight size={18} strokeWidth={1.8} /></NavSlot>
          <NavSlot><RotateCw size={16} strokeWidth={2} /></NavSlot>
          <NavSlot><Home size={16} strokeWidth={2} /></NavSlot>
          <NavSlot><Star size={16} strokeWidth={2} /></NavSlot>
          <Pill $front>
            <GreenShield />
            <LockIcon />
            <Url>
              http://<b>192.168.0.171</b>:8080/webroot/decision/view/report?viewlet=%25E7%2594%25B5%25E5%25AD%2590%25E5%25B7%25A5%25E7%25A5%25A8%252F%25E8%25A3%2581%25E7%2589%2587%
            </Url>
            <PillTools />
          </Pill>
          <BrowserTools />
        </AddressRow>
        <Toolbar>
          <ToolItem><SaveIcon />提交</ToolItem>
          <BarSep />
          <ToolItem><CheckDataIcon />数据校验</ToolItem>
          <BarSep />
          <ToolItem><PrintIcon />打印</ToolItem>
          <BarSep />
          <ToolItem><ExportIcon />导出<SmallCaret $ml={2} /></ToolItem>
          <BarSep $l={6} $r={8} />
          <ToolItem><MailIcon />邮件</ToolItem>
          <BarSep $l={7} $r={6} />
          <ToolItem $gap={3}><AddRowIcon />添加记录</ToolItem>
          <BarSep />
          <BarSep $l={128} $r={4} />
          <ToolItem><DeleteRowIcon />删除列行</ToolItem>
          <BarSep />
          <ToolItem $gap={1}><EraserIcon />清空</ToolItem>
        </Toolbar>
        <FilterPanel>
          <FilterRow>
            <Field>
              <FieldLabel $w={55}>款号:</FieldLabel>
              <Combo $w={231}><ComboValue>978429260362</ComboValue><Dropdown /></Combo>
            </Field>
            <Field $ml={48}>
              <FieldLabel $w={62}>床号:</FieldLabel>
              <Combo $w={212}><ComboValue><Tag $w={13}>1</Tag></ComboValue><Dropdown /></Combo>
            </Field>
            <Field $ml={75}>
              <FieldLabel $w={77}>季度:</FieldLabel>
              <Combo $w={142}><ComboValue>2022Q4</ComboValue><Dropdown /></Combo>
            </Field>
            <Field $ml={70}>
              <FieldLabel $w={61}>部位:</FieldLabel>
              <Combo $w={183}>
                <ComboValue>
                  <Tag $w={44}>开袋贴</Tag>
                  <Tag $w={56}>口袋专机</Tag>
                  <Tag $w={28}>帽沿</Tag>
                </ComboValue>
                <Dropdown />
              </Combo>
            </Field>
          </FilterRow>
          <FilterRow>
            <Field>
              <FieldLabel $w={55}>图号:</FieldLabel>
              <Combo $w={231}>
                <ComboValue>
                  <Tag $w={36}>2XL9</Tag>
                  <Tag $w={44}>2XL10</Tag>
                  <Tag $w={44}>2XL11</Tag>
                  <Tag $w={43}>3XL12</Tag>
                </ComboValue>
                <Dropdown />
              </Combo>
            </Field>
            <Field $ml={48}>
              <FieldLabel $w={62}>颜色:</FieldLabel>
              <Combo $w={212}><ComboValue>正黑色</ComboValue><Dropdown /></Combo>
            </Field>
            <Field $ml={75} $drop={4}>
              <FieldLabel $w={77}>工序:</FieldLabel>
              <Combo $w={142}><ComboValue>1、印花出</ComboValue><Dropdown /></Combo>
            </Field>
            <QueryButton>查询</QueryButton>
          </FilterRow>
          <SplitHandle />
        </FilterPanel>
        <Report />
      </FrontWindow>

      <Navicat />

      <Overlay width="2404" height="783" viewBox="0 0 2404 783">
        <rect x="1028.5" y="61.5" width="297" height="33" fill="none" stroke="#f0140c" strokeWidth="3" />
        <polygon points="1040,101 594,240 570,240 560,253 576,255 597,249 1041,104" fill="#fb1a10" />
        <polygon
          points="795,252.7 1000,267 1500,304 1700,318 1900,333 1985,340 1988,338 2004,347 1990,354 1985,350 1900,343 1700,328 1500,311 1000,270 795,253.3"
          fill="#fb1a10"
        />
      </Overlay>
    </Desktop>
  );
}
